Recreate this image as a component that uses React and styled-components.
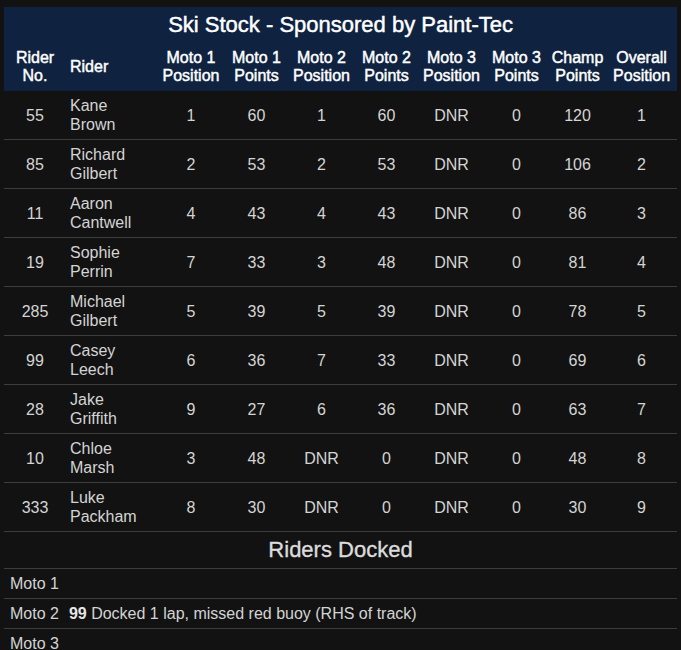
import React from "react";
import styled, { createGlobalStyle } from "styled-components";

const Global = createGlobalStyle`
  html, body { margin: 0; padding: 0; background: #121212; }
  body { font-family: "Liberation Sans", Arial, sans-serif; color: #d4d4d4; }
`;

const Page = styled.div`
  padding: 7px 4px 0 4px;
  width: 673px;
`;

const Table = styled.table`
  width: 673px;
  border-collapse: collapse;
  table-layout: fixed;
  font-size: 16px;
  line-height: 19px;
`;

const TitleCell = styled.th`
  background: #0f2341;
  color: #ffffff;
  font-size: 22px;
  font-weight: 400;
  -webkit-text-stroke: 0.45px #ffffff;
  line-height: 26px;
  padding: 5px 0 5px 0;
  text-align: center;
`;

const HeadCell = styled.th`
  background: #0f2341;
  color: #ffffff;
  font-weight: 400;
  -webkit-text-stroke: 0.45px #ffffff;
  font-size: 16px;
  line-height: 18px;
  padding: 6px 2px 6px ${(p) => (p.$left ? "4px" : "2px")};
  text-align: ${(p) => (p.$left ? "left" : "center")};
  vertical-align: middle;
`;

const Row = styled.tr`
  border-bottom: 1px solid #3d3d3d;
`;

const Cell = styled.td`
  padding: 5px 2px 5px ${(p) => (p.$left ? "4px" : "2px")};
  text-align: ${(p) => (p.$left ? "left" : "center")};
  vertical-align: middle;
  color: #d4d4d4;
`;

const Docked = styled.div`
  width: 673px;
`;

const DockedTitle = styled.div`
  border-bottom: 1px solid #3d3d3d;
  height: 36px;
  display: flex;
  align-items: center;
  justify-content: center;
  font-size: 22px;
  color: #dcdcdc;
  -webkit-text-stroke: 0.35px #dcdcdc;
`;

const DockRow = styled.div`
  border-bottom: 1px solid #3d3d3d;
  height: 29px;
  display: flex;
  align-items: center;
  gap: 10px;
  padding-left: 6px;
  font-size: 16px;
  color: #d4d4d4;
`;

const DockLabel = styled.span`
  flex: none;
`;

const Num = styled.b`
  color: #e6e6e6;
`;

const widths = [62, 92, 66, 65, 65, 65, 65, 65, 57, 71];

const headers = [
  ["Rider", "No."],
  ["Rider"],
  ["Moto 1", "Position"],
  ["Moto 1", "Points"],
  ["Moto 2", "Position"],
  ["Moto 2", "Points"],
  ["Moto 3", "Position"],
  ["Moto 3", "Points"],
  ["Champ", "Points"],
  ["Overall", "Position"],
];

const rows = [
  ["55", "Kane", "Brown", "1", "60", "1", "60", "DNR", "0", "120", "1"],
  ["85", "Richard", "Gilbert", "2", "53", "2", "53", "DNR", "0", "106", "2"],
  ["11", "Aaron", "Cantwell", "4", "43", "4", "43", "DNR", "0", "86", "3"],
  ["19", "Sophie", "Perrin", "7", "33", "3", "48", "DNR", "0", "81", "4"],
  ["285", "Michael", "Gilbert", "5", "39", "5", "39", "DNR", "0", "78", "5"],
  ["99", "Casey", "Leech", "6", "36", "7", "33", "DNR", "0", "69", "6"],
  ["28", "Jake", "Griffith", "9", "27", "6", "36", "DNR", "0", "63", "7"],
  ["10", "Chloe", "Marsh", "3", "48", "DNR", "0", "DNR", "0", "48", "8"],
  ["333", "Luke", "Packham", "8", "30", "DNR", "0", "DNR", "0", "30", "9"],
];

export default function App() {
  return (
    <>
      <Global />
      <Page>
        <Table>
          <colgroup>
            {widths.map((w, i) => (
              <col key={i} style={{ width: w }} />
            ))}
          </colgroup>
          <thead>
            <tr>
              <TitleCell colSpan={10}>Ski Stock - Sponsored by Paint-Tec</TitleCell>
            </tr>
            <tr>
              {headers.map((h, i) => (
                <HeadCell key={i} $left={i === 1}>
                  {h.map((l, j) => (
                    <React.Fragment key={j}>
                      {j > 0 && <br />}
                      {l}
                    </React.Fragment>
                  ))}
                </HeadCell>
              ))}
            </tr>
          </thead>
          <tbody>
            {rows.map((r) => (
              <Row key={r[0]}>
                <Cell>{r[0]}</Cell>
                <Cell $left>
                  {r[1]}
                  <br />
                  {r[2]}
                </Cell>
                {r.slice(3).map((v, i) => (
                  <Cell key={i}>{v}</Cell>
                ))}
              </Row>
            ))}
          </tbody>
        </Table>
        <Docked>
          <DockedTitle>Riders Docked</DockedTitle>
          <DockRow>
            <DockLabel>Moto 1</DockLabel>
          </DockRow>
          <DockRow>
            <DockLabel>Moto 2</DockLabel>
            <span>
              <Num>99</Num> Docked 1 lap, missed red buoy (RHS of track)
            </span>
          </DockRow>
          <DockRow>
            <DockLabel>Moto 3</DockLabel>
          </DockRow>
        </Docked>
      </Page>
    </>
  );
}
